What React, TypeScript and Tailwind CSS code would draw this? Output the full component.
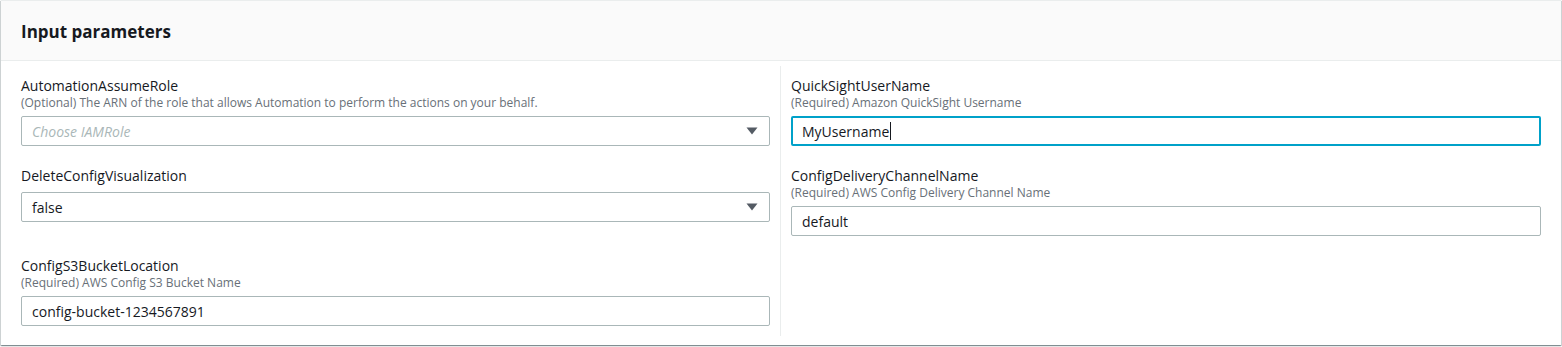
import React from "react";

const font = { fontFamily: '"Open Sans", "Noto Sans", Arial, sans-serif' };

function Caret() {
  return (
    <svg width="12" height="8" viewBox="0 0 12 8" className="shrink-0">
      <path d="M0.5 0.5 L11.5 0.5 L6 7.5 Z" fill="#545b64" />
    </svg>
  );
}

function Label({ text, desc }: { text: string; desc?: string }) {
  return (
    <div>
      <div className="text-[14px] leading-[22px] text-[#16191f]">{text}</div>
      {desc && (
        <div className="text-[12px] leading-[16px] text-[#687078] -mt-[2px]">{desc}</div>
      )}
    </div>
  );
}

function Select({ value, placeholder }: { value?: string; placeholder?: string }) {
  return (
    <div className="mt-[5px] h-[30px] border border-[#aab7b8] rounded-[2px] bg-white flex items-center justify-between pl-[10px] pr-[11px]">
      {value ? (
        <span className="text-[14px] text-[#16191f]">{value}</span>
      ) : (
        <span className="text-[14px] italic text-[#aab7b8]">{placeholder}</span>
      )}
      <Caret />
    </div>
  );
}

function Input({ value, focused }: { value: string; focused?: boolean }) {
  return (
    <div
      className={
        focused
          ? "mt-[5px] h-[30px] border-2 border-[#00a1c9] rounded-[2px] bg-white flex items-center pl-[9px]"
          : "mt-[5px] h-[30px] border border-[#aab7b8] rounded-[2px] bg-white flex items-center pl-[10px]"
      }
    >
      <span className="text-[14px] text-[#16191f]">{value}</span>
      {focused && <span className="ml-px w-px h-[18px] bg-[#16191f]" />}
    </div>
  );
}

export default function App() {
  return (
    <div className="w-[1562px] h-[347px] bg-white" style={font}>
      <div className="mx-px border-t border-[#eaeded] bg-white shadow-[0_1px_1px_0_rgba(0,28,36,0.3),1px_1px_1px_0_rgba(0,28,36,0.15),-1px_1px_1px_0_rgba(0,28,36,0.15)]">
        <div className="h-[60px] bg-[#fafafa] border-b border-[#eaeded] flex items-center px-[20px] pt-[2px]">
          <h2 className="text-[17px] leading-[22px] font-bold text-[#16191f]">Input parameters</h2>
        </div>
        <div className="px-[20px] pt-[5px] pb-[9px] grid grid-cols-2">
          <div className="border-r border-[#eaeded] pr-[10px] pt-[9px] pb-[10px]">
            <Label
              text="AutomationAssumeRole"
              desc="(Optional) The ARN of the role that allows Automation to perform the actions on your behalf."
            />
            <Select placeholder="Choose IAMRole" />
          </div>
          <div className="pl-[10px] pt-[9px] pb-[10px]">
            <Label text="QuickSightUserName" desc="(Required) Amazon QuickSight Username" />
            <Input value="MyUsername" focused />
          </div>
          <div className="border-r border-[#eaeded] pr-[10px] pt-[9px] pb-[10px]">
            <Label text="DeleteConfigVisualization" />
            <Select value="false" />
          </div>
          <div className="pl-[10px] pt-[9px] pb-[10px]">
            <Label text="ConfigDeliveryChannelName" desc="(Required) AWS Config Delivery Channel Name" />
            <Input value="default" />
          </div>
          <div className="border-r border-[#eaeded] pr-[10px] pt-[9px] pb-[10px]">
            <Label text="ConfigS3BucketLocation" desc="(Required) AWS Config S3 Bucket Name" />
            <Input value="config-bucket-1234567891" />
          </div>
          <div className="pl-[10px] pt-[9px] pb-[10px]" />
        </div>
      </div>
    </div>
  );
}
